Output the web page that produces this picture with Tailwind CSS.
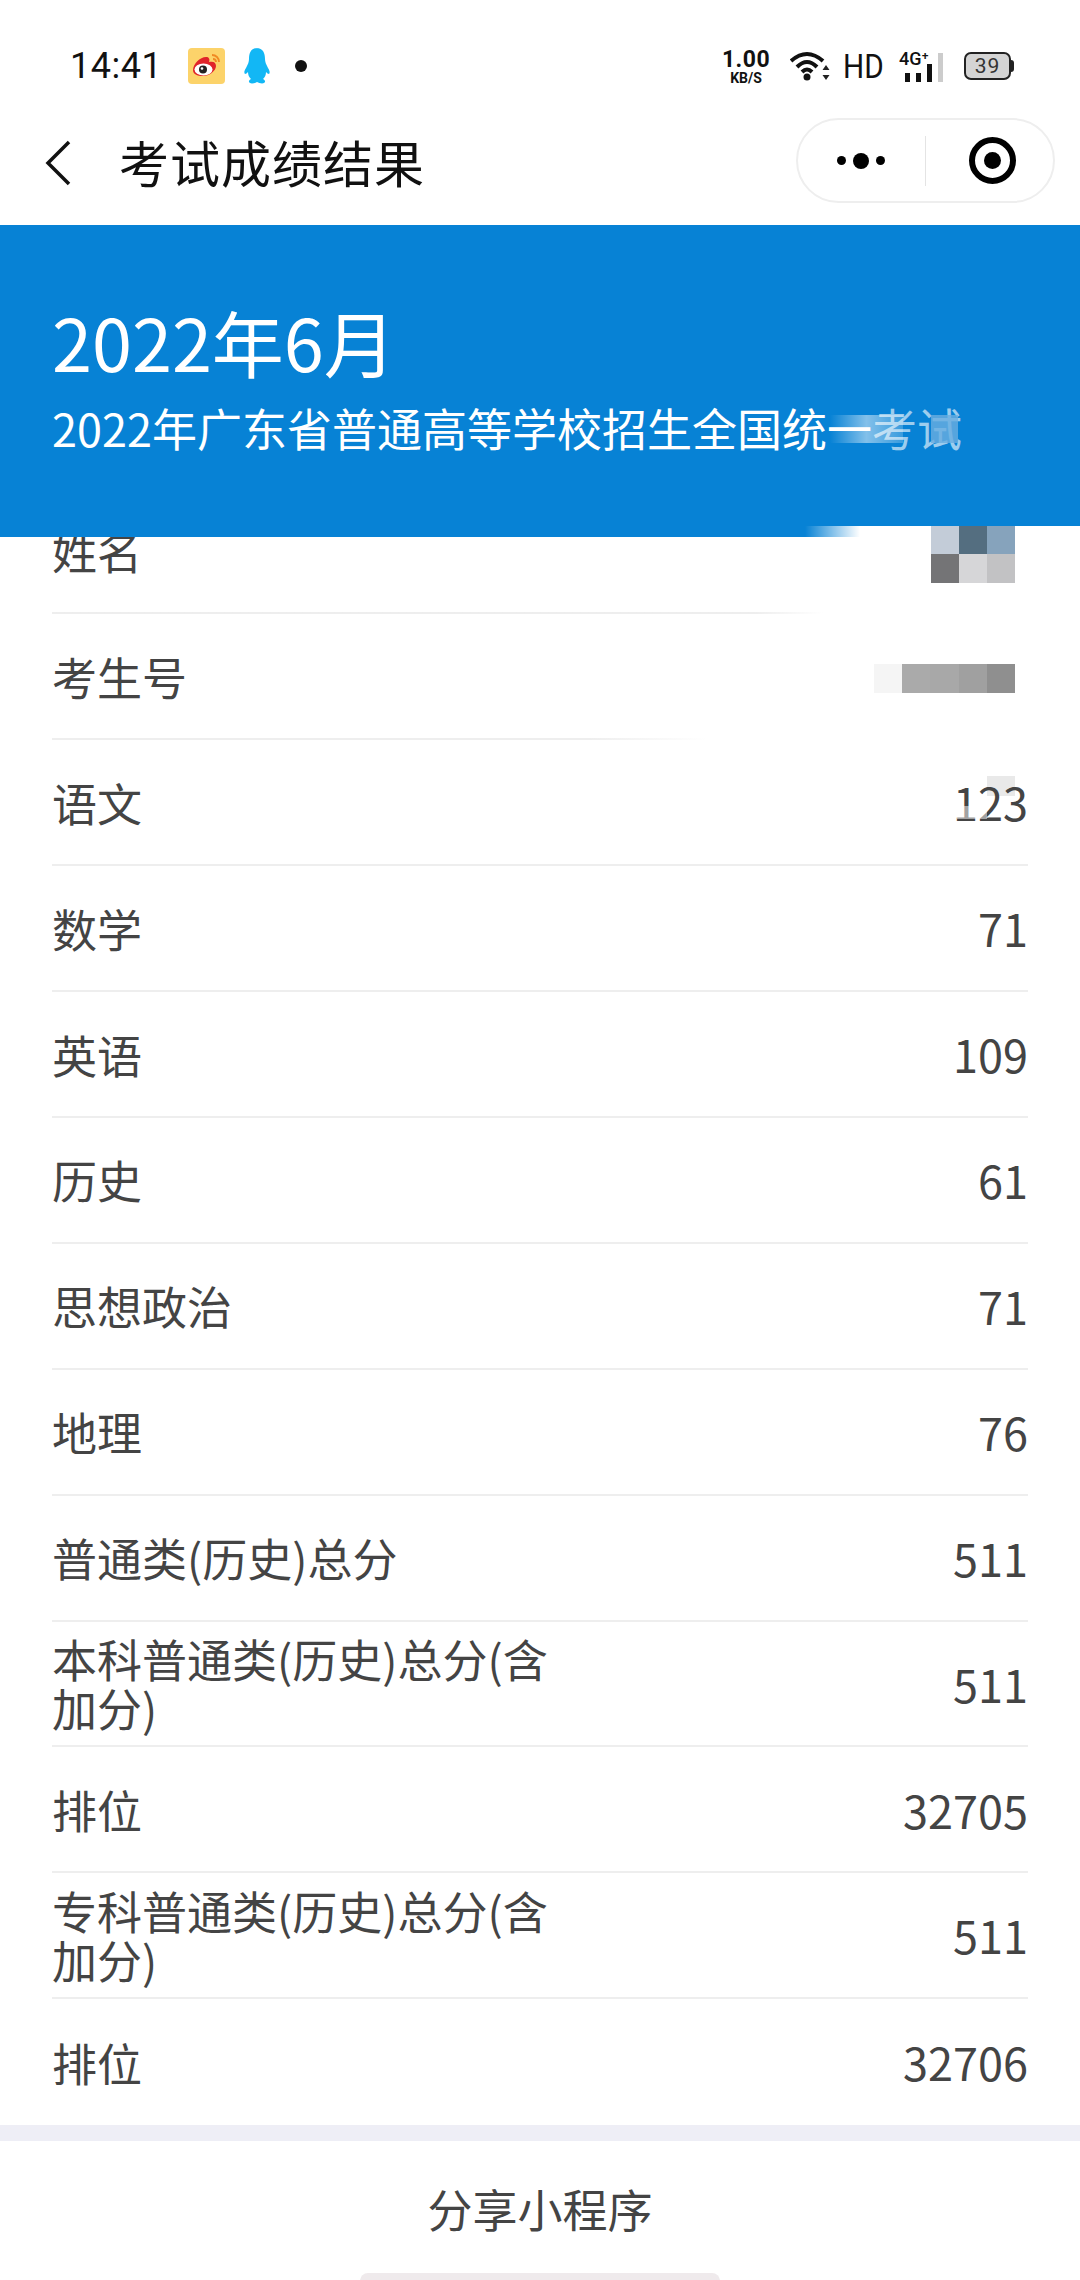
<!DOCTYPE html>
<html lang="zh-CN">
  <head>
    <meta charset="UTF-8" />
    <meta name="viewport" content="width=device-width, initial-scale=1.0" />
    <title>考试成绩结果</title>
    <script src="https://cdn.jsdelivr.net/npm/@tailwindcss/browser@4"></script>
  </head>
  <body>
    <div class="w-[1080px] h-[2280px] bg-white flex flex-col overflow-hidden font-['Noto_Sans_CJK_SC','Noto_Sans',sans-serif]">
      <!-- status bar -->
      <div class="h-[100px] shrink-0 flex items-start pt-[48px] font-['Roboto',sans-serif] text-[#111]">
        <span class="ml-[70px] w-[112px] h-[36px] flex items-center text-[36px] tracking-[0.5px] leading-none">14:41</span>
        <svg class="ml-[6px]" width="37" height="36" viewBox="0 0 37 36">
          <rect width="37" height="36" rx="4" fill="#fcd36a" />
          <path d="M5 22c0-6 7-13 13-13 3 0 4 2 3 5 4-1 7 0 7 4 0 5-7 10-13 10-6 0-10-2-10-6z" fill="#e0242a" />
          <ellipse cx="15.500" cy="21.500" rx="9" ry="6" fill="#fff" />
          <circle cx="15" cy="21.500" r="4" fill="#222" />
          <circle cx="14" cy="20.500" r="1.300" fill="#fff" />
          <path d="M24 7c4 0 7 3 7 7M25 11c2 0 3 1 3 3" fill="none" stroke="#f08a24" stroke-width="1.800" />
        </svg>
        <svg class="ml-[19px]" width="27" height="36" viewBox="0 0 27 36">
          <path d="M13.500 0C7 0 5 5 5 11c0 3-1 5-3 9-2 3-2 5-1 6 1 0 2-1 3-2 0 3 1 5 3 7-2 1-3 3-1 4 2 1 5 0 7-1 2 1 5 2 7 1 2-1 1-3-1-4 2-2 3-4 3-7 1 1 2 2 3 2 1-1 1-3-1-6-2-4-3-6-3-9 0-6-2-11-8.500-11z" fill="#12b7f5" />
        </svg>
        <span class="ml-[24px] mt-[12px] w-[12px] h-[12px] rounded-full bg-[#111]"></span>

        <div class="ml-[415px] flex flex-col items-center w-[48px] font-bold leading-none">
          <span class="text-[23px] h-[22px] tracking-[0.5px]">1.00</span>
          <span class="text-[14px] mt-[1px]">KB/S</span>
        </div>
        <svg class="ml-[20px] mt-[2px]" width="41" height="31" viewBox="0 0 41 31">
          <path d="M1 11Q17 -3 33 11M7 17Q17 7 27 17M12 22Q17 17 22 22" fill="none" stroke="#111" stroke-width="4" />
          <circle cx="17" cy="27" r="3.500" fill="#111" />
          <path d="M36 15l-3.500 5h7zM36 30l-3.500-5h7z" fill="#222" />
        </svg>
        <span class="ml-[12px] mt-[2px] text-[33px] leading-[34px] scale-x-90 origin-left w-[41px]">HD</span>
        <div class="ml-[15px] relative w-[46px] h-[32px] mt-[2px]">
          <span class="absolute left-0 top-0 text-[18px] leading-none font-medium">4G⁺</span>
          <div class="absolute left-[6px] bottom-0 flex items-end gap-[6px]">
            <span class="w-[5px] h-[9px] bg-[#111]"></span>
            <span class="w-[5px] h-[9px] bg-[#111]"></span>
            <span class="w-[5px] h-[18px] bg-[#111]"></span>
            <span class="w-[5px] h-[29px] bg-[#ccc]"></span>
          </div>
        </div>
        <div class="ml-[19px] mt-[4px] w-[50px] h-[28px] flex">
          <div class="w-[47px] h-[28px] border-[2.500px] border-[#222] rounded-[7px] bg-[#d4d4d4] flex items-center justify-center text-[21px] leading-none tracking-[1px] text-[#333]">39</div>
          <span class="mt-[8px] w-[3px] h-[12px] bg-[#222] rounded-r-sm"></span>
        </div>
      </div>

      <!-- nav -->
      <div class="h-[125px] shrink-0 flex items-center bg-white">
        <svg class="ml-[44px]" width="28" height="48" viewBox="0 0 28 48">
          <path d="M25 3L4 24l21 21" fill="none" stroke="#111" stroke-width="3.500" />
        </svg>
        <h1 class="ml-[47px] mt-[-4px] text-[50px] leading-none tracking-[1px] text-[#111]">考试成绩结果</h1>
        <div class="ml-auto mr-[25px] mt-[-4px] w-[259px] h-[85px] rounded-full border-2 border-[#eeeeee] flex items-center">
          <div class="w-[87px] flex items-center justify-end gap-[7px]">
            <span class="w-[9px] h-[9px] rounded-full bg-black"></span>
            <span class="w-[16px] h-[16px] rounded-full bg-black"></span>
            <span class="w-[9px] h-[9px] rounded-full bg-black"></span>
          </div>
          <span class="ml-[40px] w-[1px] h-[50px] bg-[#e4e4e4]"></span>
          <div class="ml-[43px] w-[47px] h-[47px] rounded-full border-[6px] border-black flex items-center justify-center">
            <span class="w-[17px] h-[17px] rounded-full bg-black"></span>
          </div>
        </div>
      </div>

      <!-- blue header -->
      <div class="relative z-10 h-[312px] shrink-0 bg-[#0782d5] text-white pl-[52px] pt-[74px]">
        <div class="text-[72px] leading-[84px]">2022年6月</div>
        <div class="mt-[17px] text-[45px] leading-[56px] whitespace-nowrap">2022年广东省普通高等学校招生全国统一<span class="opacity-60">考试</span></div>
        <!-- smudges left by the blur in the screenshot -->
        <div class="absolute left-[830px] top-[190px] w-[73px] h-[28px] bg-linear-to-r from-white/0 via-white/50 to-white/20"></div>
        <div class="absolute left-[931px] top-[190px] w-[27px] h-[28px] bg-[#6aaee0]/80"></div>
        <div class="absolute left-[805px] right-0 bottom-0 h-[11px] bg-linear-to-r from-white/0 to-white to-[20%]"></div>
      </div>

      <!-- score rows -->
      <div class="flex-1 mt-[-48.500px] text-[45px] text-[#444]">
        <div class="h-[125.9px] flex flex-col">
          <div class="flex-1 flex items-center justify-between pl-[52px] pr-[52px]">
            <span class="leading-[49px]">姓名</span>
            <div class="relative z-20 mr-[13px] mt-[8px] grid grid-cols-3 w-[84px] h-[57px]">
              <span class="bg-[#c3ccd8]"></span><span class="bg-[#546e80]"></span><span class="bg-[#86a3bc]"></span>
              <span class="bg-[#747476]"></span><span class="bg-[#d6d6d8]"></span><span class="bg-[#c2c2c4]"></span>
            </div>
          </div>
          <div class="mx-[52px] h-[2px] bg-linear-to-r from-[#eeeeee] from-[72%] to-white to-[79%]"></div>
        </div>
        <div class="h-[125.9px] flex flex-col">
          <div class="flex-1 flex items-center justify-between pl-[52px] pr-[52px]">
            <span class="leading-[49px]">考生号</span>
            <div class="mr-[13px] mt-[5px] flex w-[141px] h-[29px]">
              <span class="flex-1 bg-[#f5f5f5]"></span><span class="flex-1 bg-[#aaaaaa]"></span><span class="flex-1 bg-[#a8a8a8]"></span><span class="flex-1 bg-[#a0a0a0]"></span><span class="flex-1 bg-[#8f8f8f]"></span>
            </div>
          </div>
          <div class="mx-[52px] h-[2px] bg-linear-to-r from-[#eeeeee] from-[55%] to-white to-[67%]"></div>
        </div>
        <div class="h-[125.9px] flex flex-col">
          <div class="flex-1 flex items-center justify-between pl-[52px] pr-[52px]">
            <span class="leading-[49px]">语文</span>
            <span class="relative">
              <span class="absolute left-[34px] top-[8px] w-[28px] h-[20px] bg-[#e9e9e9]"></span>
              <span class="relative">123</span>
              <span class="absolute left-[4px] top-[38px] w-[30px] h-[13px] bg-white/50"></span>
            </span>
          </div>
          <div class="mx-[52px] h-[2px] bg-[#eeeeee]"></div>
        </div>
        <div class="h-[125.9px] flex flex-col">
          <div class="flex-1 flex items-center justify-between pl-[52px] pr-[52px]">
            <span class="leading-[49px]">数学</span>
            <span>71</span>
          </div>
          <div class="mx-[52px] h-[2px] bg-[#eeeeee]"></div>
        </div>
        <div class="h-[125.9px] flex flex-col">
          <div class="flex-1 flex items-center justify-between pl-[52px] pr-[52px]">
            <span class="leading-[49px]">英语</span>
            <span>109</span>
          </div>
          <div class="mx-[52px] h-[2px] bg-[#eeeeee]"></div>
        </div>
        <div class="h-[125.9px] flex flex-col">
          <div class="flex-1 flex items-center justify-between pl-[52px] pr-[52px]">
            <span class="leading-[49px]">历史</span>
            <span>61</span>
          </div>
          <div class="mx-[52px] h-[2px] bg-[#eeeeee]"></div>
        </div>
        <div class="h-[125.9px] flex flex-col">
          <div class="flex-1 flex items-center justify-between pl-[52px] pr-[52px]">
            <span class="leading-[49px]">思想政治</span>
            <span>71</span>
          </div>
          <div class="mx-[52px] h-[2px] bg-[#eeeeee]"></div>
        </div>
        <div class="h-[125.9px] flex flex-col">
          <div class="flex-1 flex items-center justify-between pl-[52px] pr-[52px]">
            <span class="leading-[49px]">地理</span>
            <span>76</span>
          </div>
          <div class="mx-[52px] h-[2px] bg-[#eeeeee]"></div>
        </div>
        <div class="h-[125.9px] flex flex-col">
          <div class="flex-1 flex items-center justify-between pl-[52px] pr-[52px]">
            <span class="leading-[49px]">普通类(历史)总分</span>
            <span>511</span>
          </div>
          <div class="mx-[52px] h-[2px] bg-[#eeeeee]"></div>
        </div>
        <div class="h-[125.9px] flex flex-col">
          <div class="flex-1 flex items-center justify-between pl-[52px] pr-[52px]">
            <span class="w-[500px] leading-[49px]">本科普通类(历史)总分(含加分)</span>
            <span>511</span>
          </div>
          <div class="mx-[52px] h-[2px] bg-[#eeeeee]"></div>
        </div>
        <div class="h-[125.9px] flex flex-col">
          <div class="flex-1 flex items-center justify-between pl-[52px] pr-[52px]">
            <span class="leading-[49px]">排位</span>
            <span>32705</span>
          </div>
          <div class="mx-[52px] h-[2px] bg-[#eeeeee]"></div>
        </div>
        <div class="h-[125.9px] flex flex-col">
          <div class="flex-1 flex items-center justify-between pl-[52px] pr-[52px]">
            <span class="w-[500px] leading-[49px]">专科普通类(历史)总分(含加分)</span>
            <span>511</span>
          </div>
          <div class="mx-[52px] h-[2px] bg-[#eeeeee]"></div>
        </div>
        <div class="h-[125.9px] flex flex-col">
          <div class="flex-1 flex items-center justify-between pl-[52px] pr-[52px]">
            <span class="leading-[49px]">排位</span>
            <span>32706</span>
          </div>
        </div>
      </div>

      <!-- footer -->
      <div class="h-[16px] shrink-0 bg-[#eeeef6]"></div>
      <div class="h-[141px] shrink-0 flex flex-col items-center">
        <div class="flex-1 flex items-center text-[45px] text-[#444] pt-[4px]">分享小程序</div>
        <div class="w-[360px] h-[9px] rounded-t-lg bg-[#efeaec]"></div>
      </div>
    </div>
  </body>
</html>
